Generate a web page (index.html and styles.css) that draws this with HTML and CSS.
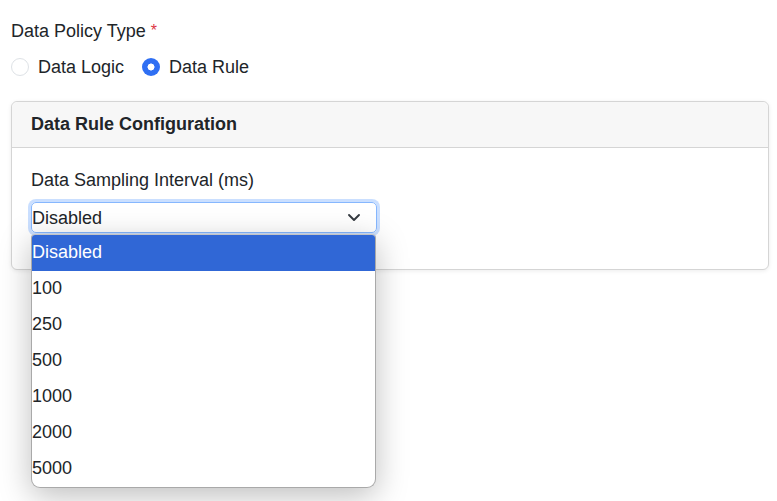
FILE: index.html
```html
<!DOCTYPE html>
<html>
<head>
<meta charset="utf-8">
<link rel="stylesheet" href="styles.css">
</head>
<body>
<div class="page">
  <div class="field-label">Data Policy Type <span class="req">*</span></div>
  <div class="radios">
    <label class="radio"><span class="circle"></span>Data Logic</label>
    <label class="radio"><span class="circle checked"></span>Data Rule</label>
  </div>
  <div class="card">
    <div class="card-header">Data Rule Configuration</div>
    <div class="card-body">
      <div class="group">
        <div class="label">Data Sampling Interval (ms)</div>
        <div class="select-wrap">
          <div class="select">
            <span>Disabled</span>
            <svg class="chev" width="14" height="9" viewBox="0 0 14 9"><path d="M2 2 L7 7 L12 2" fill="none" stroke="#343a40" stroke-width="1.9" stroke-linecap="round" stroke-linejoin="round"/></svg>
          </div>
          <ul class="menu">
            <li class="active">Disabled</li>
            <li>100</li>
            <li>250</li>
            <li>500</li>
            <li>1000</li>
            <li>2000</li>
            <li>5000</li>
          </ul>
        </div>
      </div>
    </div>
  </div>
</div>
</body>
</html>
```

FILE: styles.css
```css
* { box-sizing: border-box; }
html, body { margin: 0; padding: 0; background: #fff; }
body {
  font-family: "Liberation Sans", Arial, sans-serif;
  font-size: 18px;
  line-height: 24px;
  color: #212529;
  width: 777px;
  height: 501px;
  overflow: hidden;
}
.page { padding: 19px 8px 0 11px; }
.field-label { height: 24px; }
.req { color: #dc3545; font-size: 16px; vertical-align: top; }
.radios { display: flex; gap: 18px; margin-top: 12px; height: 24px; align-items: center; }
.radio { display: flex; align-items: center; gap: 9px; }
.circle {
  width: 18px; height: 18px; border-radius: 50%;
  border: 1px solid #dee2e6; background: #fff;
  display: inline-block;
}
.circle.checked {
  border: none;
  background: radial-gradient(circle, #fff 0 3.2px, #2f6ff3 3.8px);
}
.card {
  margin-top: 22px;
  border: 1px solid #d5d5d5;
  border-radius: 6px;
  box-shadow: 0 1px 4px rgba(0,0,0,0.08);
  background: #fff;
}
.card-header {
  background: #f7f7f7;
  border-bottom: 1px solid #d5d5d5;
  border-radius: 6px 6px 0 0;
  padding: 10px 19px 11px;
  font-weight: bold;
}
.card-body { padding: 20px 19px 20px; }
.group { margin-bottom: 16px; }
.label { margin-bottom: 10px; }
.select-wrap { position: relative; width: 346px; }
.select {
  height: 31px;
  width: 346px;
  border: 1px solid #86b7fe;
  border-radius: 5px;
  box-shadow: 0 0 0 3px rgba(13,110,253,0.22);
  display: flex; align-items: center; justify-content: space-between;
  padding: 0 15px 0 0;
}
.chev { display: block; }
.menu {
  position: absolute;
  left: 0; top: 32px;
  width: 345px;
  margin: 0; padding: 0;
  list-style: none;
  background: #fff;
  border: 1px solid #a9a9a9;
  border-top-color: #c4c4c4;
  border-radius: 4px 4px 9px 9px;
  box-shadow: 0 8px 32px rgba(0,0,0,0.26);
  overflow: hidden;
  z-index: 5;
}
.menu li { height: 36px; line-height: 35px; padding-left: 0; }
.menu li.active { background: #3067d6; color: #fff; }
```
